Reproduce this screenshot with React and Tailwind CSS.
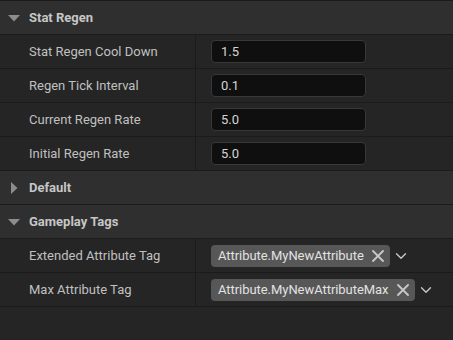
import { ChevronDown } from 'lucide-react'

function Caret({ open }) {
  return (
    <svg width="12" height="12" viewBox="0 0 12 12" className="shrink-0">
      {open ? (
        <path d="M0 3 L12 3 L6 9.5 Z" fill="#8c8c8c" />
      ) : (
        <path d="M3 0 L9.5 6 L3 12 Z" fill="#8c8c8c" />
      )}
    </svg>
  )
}

function Header({ title, open = true }) {
  return (
    <div className="flex h-[34px] items-center gap-[9px] border-b border-[#1b1b1b] bg-[#2f2f2f] pl-[8px] text-[13px] font-bold text-[#c6c6c6]">
      <Caret open={open} />
      <span>{title}</span>
    </div>
  )
}

function Row({ label, children }) {
  return (
    <div className="flex h-[34px] border-b border-[#1b1b1b] bg-[#252525]">
      <div className="flex w-[196px] shrink-0 items-center border-r border-[#1b1b1b] pl-[29px] text-[13px] text-[#c0c0c0]">
        {label}
      </div>
      <div className="flex flex-1 items-center pl-[15px]">{children}</div>
    </div>
  )
}

function NumberBox({ value }) {
  return (
    <div className="flex h-[23px] w-[155px] items-center rounded-[4px] border border-[#383838] bg-[#0f0f0f] pl-[9px] text-[13px] text-[#d4d4d4]">
      {value}
    </div>
  )
}

function TagChip({ tag }) {
  return (
    <div className="flex items-center">
      <div className="flex h-[22px] items-center gap-[8px] rounded-[4px] bg-[#575757] pl-[7px] pr-[6px] text-[13px] tracking-[-0.05px] text-[#e2e2e2]">
        <span>{tag}</span>
        <svg width="12" height="12" viewBox="0 0 12 12">
          <path d="M1 1 L11 11 M11 1 L1 11" stroke="#c8c8c8" strokeWidth="1.8" strokeLinecap="round" />
        </svg>
      </div>
      <ChevronDown className="ml-[2px] h-[18px] w-[18px] text-[#c8c8c8]" strokeWidth={1.8} />
    </div>
  )
}

export default function App() {
  return (
    <div className="h-[340px] w-[453px] overflow-hidden bg-[#252525] font-['Roboto','Liberation_Sans',sans-serif]">
      <div className="h-px bg-[#1b1b1b]" />
      <Header title="Stat Regen" />
      <Row label="Stat Regen Cool Down"><NumberBox value="1.5" /></Row>
      <Row label="Regen Tick Interval"><NumberBox value="0.1" /></Row>
      <Row label="Current Regen Rate"><NumberBox value="5.0" /></Row>
      <Row label="Initial Regen Rate"><NumberBox value="5.0" /></Row>
      <Header title="Default" open={false} />
      <Header title="Gameplay Tags" />
      <Row label="Extended Attribute Tag"><TagChip tag="Attribute.MyNewAttribute" /></Row>
      <Row label="Max Attribute Tag"><TagChip tag="Attribute.MyNewAttributeMax" /></Row>
    </div>
  )
}
